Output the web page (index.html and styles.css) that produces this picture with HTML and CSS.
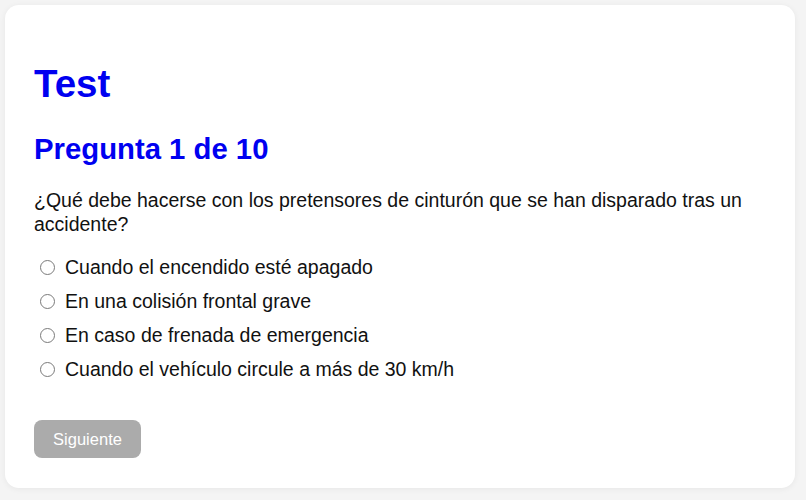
FILE: index.html
```html
<!DOCTYPE html>
<html lang="es">
<head>
<meta charset="utf-8">
<title>Test</title>
<link rel="stylesheet" href="styles.css">
</head>
<body>
<main class="card">
  <h1 class="title">Test</h1>
  <h2 class="counter">Pregunta 1 de 10</h2>
  <p class="question">¿Qué debe hacerse con los pretensores de cinturón que se han disparado tras un accidente?</p>
  <div class="options">
    <label class="option"><input type="radio" name="q1" class="radio"><span>Cuando el encendido esté apagado</span></label>
    <label class="option"><input type="radio" name="q1" class="radio"><span>En una colisión frontal grave</span></label>
    <label class="option"><input type="radio" name="q1" class="radio"><span>En caso de frenada de emergencia</span></label>
    <label class="option"><input type="radio" name="q1" class="radio"><span>Cuando el vehículo circule a más de 30 km/h</span></label>
  </div>
  <div class="actions">
    <button class="next" disabled>Siguiente</button>
  </div>
</main>
</body>
</html>
```

FILE: styles.css
```css
html, body {
  margin: 0;
  padding: 0;
  background: #f4f4f4;
}

body {
  padding: 5px 11px 12px 5px;
  font-family: "Liberation Sans", Arial, sans-serif;
  color: #111;
}

.card {
  background: #fff;
  border-radius: 14px;
  box-shadow: 0 1px 6px rgba(0, 0, 0, 0.06);
  padding: 56px 29px 30px 29px;
  display: flex;
  flex-direction: column;
}

.title {
  margin: 0;
  font-size: 38.5px;
  line-height: 45px;
  font-weight: bold;
  color: #0000f0;
}

.counter {
  margin: 25px 0 0 0;
  font-size: 29.3px;
  line-height: 35px;
  font-weight: bold;
  color: #0000f0;
}

.question {
  margin: 22px 0 0 0;
  font-size: 19.5px;
  line-height: 24px;
}

.options {
  margin-top: 19px;
  display: flex;
  flex-direction: column;
  gap: 10px;
}

.option {
  display: flex;
  align-items: center;
  font-size: 19.5px;
  line-height: 24px;
}

.radio {
  appearance: none;
  -webkit-appearance: none;
  margin: 0 10px 0 6px;
  width: 15px;
  height: 15px;
  border: 1px solid #7a7a7a;
  border-radius: 50%;
  background: #fff;
  box-sizing: border-box;
  flex: none;
}

.actions {
  margin-top: 39px;
  display: flex;
}

.next {
  font-family: "Liberation Sans", Arial, sans-serif;
  font-size: 16.5px;
  color: #fff;
  background: #ababab;
  border: none;
  border-radius: 8px;
  width: 107px;
  height: 38px;
  padding: 0;
}
```
